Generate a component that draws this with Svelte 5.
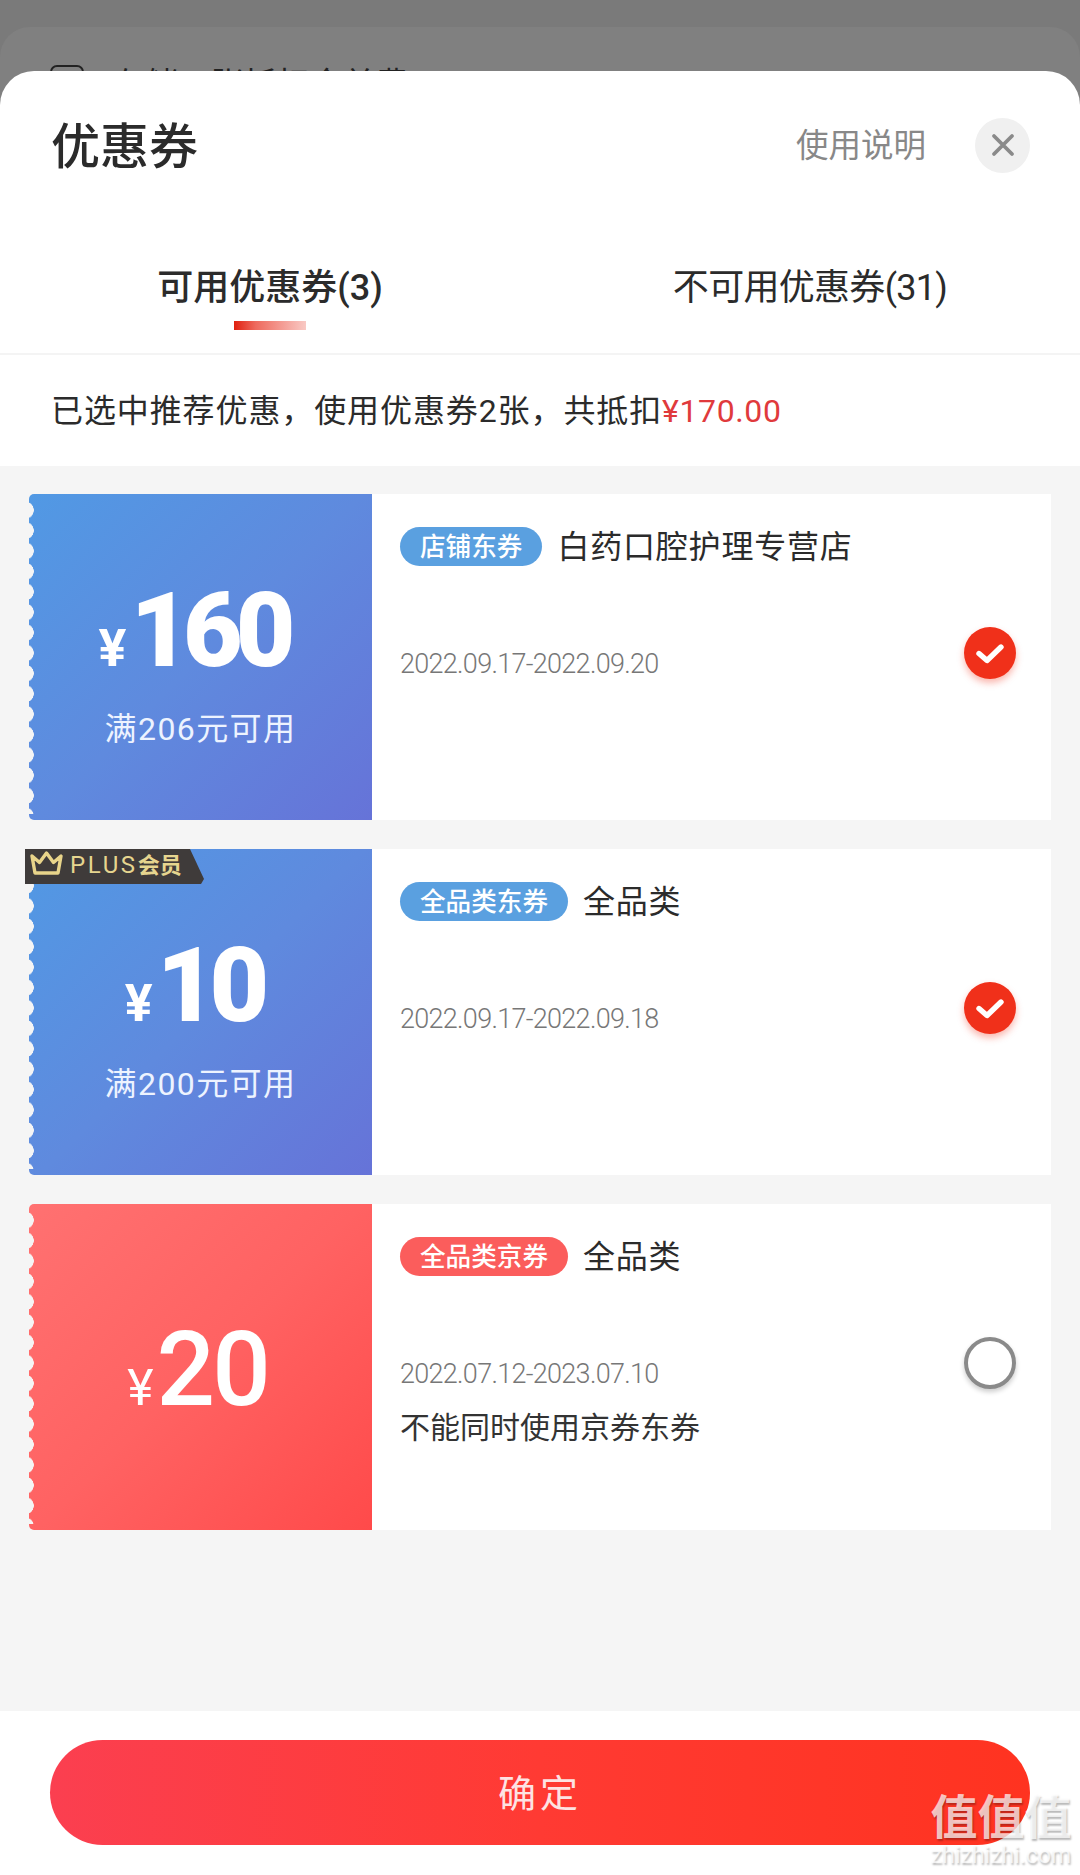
<script lang="ts">
	type Coupon = {
		amount: string;
		limit?: string;
		tag: string;
		title: string;
		dates: string;
		note?: string;
		tone: 'blue' | 'red';
		plus?: boolean;
		checked: boolean;
	};

	const coupons: Coupon[] = [
		{
			amount: '160',
			limit: '满206元可用',
			tag: '店铺东券',
			title: '白药口腔护理专营店',
			dates: '2022.09.17-2022.09.20',
			tone: 'blue',
			checked: true
		},
		{
			amount: '10',
			limit: '满200元可用',
			tag: '全品类东券',
			title: '全品类',
			dates: '2022.09.17-2022.09.18',
			tone: 'blue',
			plus: true,
			checked: true
		},
		{
			amount: '20',
			tag: '全品类京券',
			title: '全品类',
			dates: '2022.07.12-2023.07.10',
			note: '不能同时使用京券东券',
			tone: 'red',
			checked: false
		}
	];
</script>

<div class="page">
	<!-- page behind the dimmed overlay, only its top shows above the sheet -->
	<div class="behind">
		<span class="behind__box"></span>
		<span class="behind__text">存储一张抵扣全单费</span>
	</div>

	<section class="sheet">
		<header class="head">
			<h1>优惠券</h1>
			<span class="head__help">使用说明</span>
			<span class="head__close" aria-hidden="true">
				<svg viewBox="0 0 24 24" width="24" height="24">
					<path d="M3 3 L21 21 M21 3 L3 21" fill="none" stroke="#8a8a8a" stroke-width="3.8" stroke-linecap="round" />
				</svg>
			</span>
		</header>

		<nav class="tabs">
			<div class="tab tab--active">可用优惠券(3)</div>
			<div class="tab">不可用优惠券(31)</div>
		</nav>

		<div class="notice">已选中推荐优惠，使用优惠券2张，共抵扣<em>¥170.00</em></div>

		<div class="list">
			{#each coupons as c}
				<article class="coupon">
					<div class="face face--{c.tone}" class:face--solo={!c.limit}>
						{#if c.plus}
							<div class="plus">
								<svg viewBox="0 0 33 24" width="33" height="24">
									<path d="M2 5 L9.5 11.5 L16.5 2 L23.5 11.5 L31 5 L28 22 L5 22 Z" fill="none" stroke="#e8d48a" stroke-width="3.4" stroke-linejoin="round" />
								</svg>
								<span><b>PLUS</b><i>会员</i></span>
							</div>
						{/if}
						<div class="price">
							<span class="price__unit">¥</span><span class="price__num">{c.amount}</span>
						</div>
						{#if c.limit}
							<div class="face__limit">{c.limit}</div>
						{/if}
					</div>
					<div class="info">
						<div class="info__top">
							<span class="tag tag--{c.tone}">{c.tag}</span>
							<span class="info__title">{c.title}</span>
						</div>
						<div class="info__dates">{c.dates}</div>
						{#if c.note}
							<div class="info__note">{c.note}</div>
						{/if}
						<span class="pick" class:pick--on={c.checked} aria-hidden="true">
							{#if c.checked}
								<svg viewBox="0 0 52 52" width="52" height="52">
									<path d="M15 26.5 L23 33.5 L37 20" fill="none" stroke="#fff" stroke-width="5.4" stroke-linecap="round" stroke-linejoin="round" />
								</svg>
							{/if}
						</span>
					</div>
				</article>
			{/each}
		</div>

		<footer class="foot">
			<button type="button" class="confirm">确定</button>
		</footer>
	</section>

	<div class="mark" aria-hidden="true">
		<div class="mark__logo">值值值</div>
		<div class="mark__url">zhizhizhi.com</div>
	</div>
</div>

<style>
	:global(body) {
		margin: 0;
	}
	.page {
		position: relative;
		height: 1875px;
		overflow: hidden;
		background: #7a7a7a;
		font-family: Roboto, 'Noto Sans CJK SC', sans-serif;
		color: #2b2b2b;
	}
	.behind {
		position: absolute;
		top: 27px;
		left: 0;
		right: 0;
		height: 120px;
		box-sizing: border-box;
		padding: 38px 0 0 50px;
		display: flex;
		gap: 28px;
		background: #808080;
		border-radius: 30px 30px 0 0;
	}
	.behind__box {
		width: 30px;
		height: 30px;
		border: 2px solid #222;
		border-radius: 7px;
	}
	.behind__text {
		font-size: 33px;
		line-height: 40px;
		color: #222;
	}
	.sheet {
		position: relative;
		display: flex;
		flex-direction: column;
		height: 1804px;
		margin-top: 71px;
		background: #fff;
		border-radius: 34px 34px 0 0;
	}
	.head {
		display: flex;
		align-items: center;
		height: 148px;
		padding: 0 50px 0 51px;
	}
	.head h1 {
		margin: -6px auto 0 0;
		font-size: 49px;
		font-weight: 500;
	}
	.head__help {
		margin: -6px 49px 0 0;
		font-size: 32.5px;
		color: #888;
	}
	.head__close {
		display: grid;
		place-items: center;
		width: 55px;
		height: 55px;
		border-radius: 50%;
		background: #f0f0f0;
	}
	.tabs {
		display: grid;
		grid-template-columns: 1fr 1fr;
		height: 136px;
		border-bottom: 2px solid #f4f4f4;
		box-sizing: border-box;
	}
	.tab {
		position: relative;
		text-align: center;
		font-size: 36px;
		letter-spacing: -0.7px;
		line-height: 138px;
		color: #2b2b2b;
	}
	.tab--active {
		font-weight: 500;
		letter-spacing: 0;
	}
	.tab--active::after {
		content: '';
		position: absolute;
		left: 234px;
		top: 102px;
		width: 72px;
		height: 9px;
		background: linear-gradient(90deg, #e0200f 0%, #ee6a5e 30%, #f9c9c4 100%);
	}
	.notice {
		height: 111px;
		padding-left: 51px;
		font-size: 32px;
		letter-spacing: 0.9px;
		line-height: 112px;
		white-space: nowrap;
		color: #2b2b2b;
	}
	.notice em {
		font-style: normal;
		color: #e03a3c;
		letter-spacing: 0.6px;
	}
	.list {
		flex: 1;
		display: flex;
		flex-direction: column;
		gap: 29px;
		padding: 28px 29px 0;
		background: #f5f5f5;
	}
	.coupon {
		display: flex;
		height: 326px;
	}
	.face {
		position: relative;
		flex: none;
		width: 343px;
		display: flex;
		flex-direction: column;
		align-items: center;
		box-sizing: border-box;
		padding: 85px 0 0;
		color: #fff;
		border-radius: 5px 0 0 5px;
	}
	.face--solo {
		padding-top: 114px;
	}
	/* scalloped tear-off edge */
	.face::before {
		content: '';
		position: absolute;
		left: 0;
		top: 6px;
		bottom: 6px;
		width: 5px;
		background: radial-gradient(circle at -4px 50%, #f5f5f5 8.5px, transparent 9px) 0 0 / 5px 20.4px repeat-y;
	}
	.face--blue {
		background: linear-gradient(135deg, #5199e4 0%, #5f8ade 50%, #6673d8 100%);
	}
	.face--red {
		background: linear-gradient(135deg, #ff7171 0%, #ff6262 50%, #ff4a4a 100%);
	}
	.price {
		display: flex;
		align-items: baseline;
		height: 104px;
		line-height: 104px;
	}
	.price__unit {
		font-size: 52px;
		font-weight: 700;
		margin-right: 4px;
	}
	.price__num {
		font-size: 103px;
		font-weight: 900;
		letter-spacing: -7px;
		margin-right: 14px;
	}
	.face--red .price__unit {
		font-size: 50px;
		font-weight: 400;
		margin-right: 3px;
	}
	.face--red .price__num {
		font-weight: 500;
		letter-spacing: -3px;
		margin-right: 6px;
	}
	.face__limit {
		margin-top: 24px;
		font-size: 32px;
		letter-spacing: 1.4px;
		line-height: 44px;
		color: #edf3ff;
	}
	.plus {
		position: absolute;
		left: -4px;
		top: 0;
		width: 179px;
		height: 35px;
		display: flex;
		align-items: center;
		gap: 7px;
		padding-left: 5px;
		box-sizing: border-box;
		background: #3f3b3a;
		clip-path: polygon(0 0, 165px 0, 179px 30px, 176px 35px, 0 35px);
		color: #e6d58f;
		line-height: 35px;
		white-space: nowrap;
	}
	.plus svg {
		flex: none;
		margin-top: -7px;
	}
	.plus b {
		font-weight: 400;
		letter-spacing: 2.6px;
		font-size: 24px;
	}
	.plus i {
		font-style: normal;
		font-weight: 700;
		font-size: 22px;
	}
	.info {
		position: relative;
		flex: 1;
		min-width: 0;
		box-sizing: border-box;
		padding: 33px 0 0 28px;
		background: #fff;
	}
	.info__top {
		display: flex;
		align-items: center;
		gap: 15px;
		height: 39px;
	}
	.tag {
		height: 39px;
		padding: 0 20px;
		border-radius: 20px;
		font-size: 25.6px;
		font-weight: 500;
		line-height: 41px;
		color: #fff;
		white-space: nowrap;
	}
	.tag--blue {
		background: #5aa0e0;
	}
	.tag--red {
		background: #fb5d5c;
	}
	.info__title {
		margin-top: -5px;
		font-size: 32px;
		letter-spacing: 0.8px;
		color: #2b2b2b;
	}
	.info__dates {
		margin-top: 80px;
		font-size: 27px;
		font-weight: 300;
		line-height: 36px;
		letter-spacing: -0.7px;
		color: #777;
	}
	.info__note {
		margin-top: 18px;
		font-size: 30px;
		line-height: 36px;
		color: #333;
	}
	.pick {
		position: absolute;
		left: 592px;
		top: 133px;
		box-sizing: border-box;
		width: 52px;
		height: 52px;
		border: 4.5px solid #8a8a8a;
		border-radius: 50%;
		box-shadow: 0 3px 5px rgba(0, 0, 0, 0.2);
	}
	.pick--on {
		border: 0;
		background: #f0301a;
		box-shadow: 0 4px 7px rgba(240, 48, 26, 0.35);
	}
	.pick svg {
		display: block;
	}
	.foot {
		flex: none;
		height: 164px;
		box-sizing: border-box;
		padding: 29px 50px 0;
	}
	.confirm {
		display: block;
		width: 100%;
		height: 105px;
		padding: 0 0 5px;
		border: 0;
		border-radius: 53px;
		background: linear-gradient(90deg, #fb3f50 0%, #ff3a33 50%, #ff3320 100%);
		font-family: inherit;
		font-size: 38px;
		letter-spacing: 4px;
		color: #fde3e3;
	}
	.mark {
		position: absolute;
		left: 928px;
		top: 1793px;
		width: 146px;
		text-align: center;
		color: rgba(255, 255, 255, 0.72);
		text-shadow: 1px 2px 2px rgba(0, 0, 0, 0.28);
	}
	.mark__logo {
		font-size: 47px;
		font-weight: 700;
		line-height: 50px;
	}
	.mark__url {
		font-size: 23px;
		line-height: 26px;
		white-space: nowrap;
	}
</style>
